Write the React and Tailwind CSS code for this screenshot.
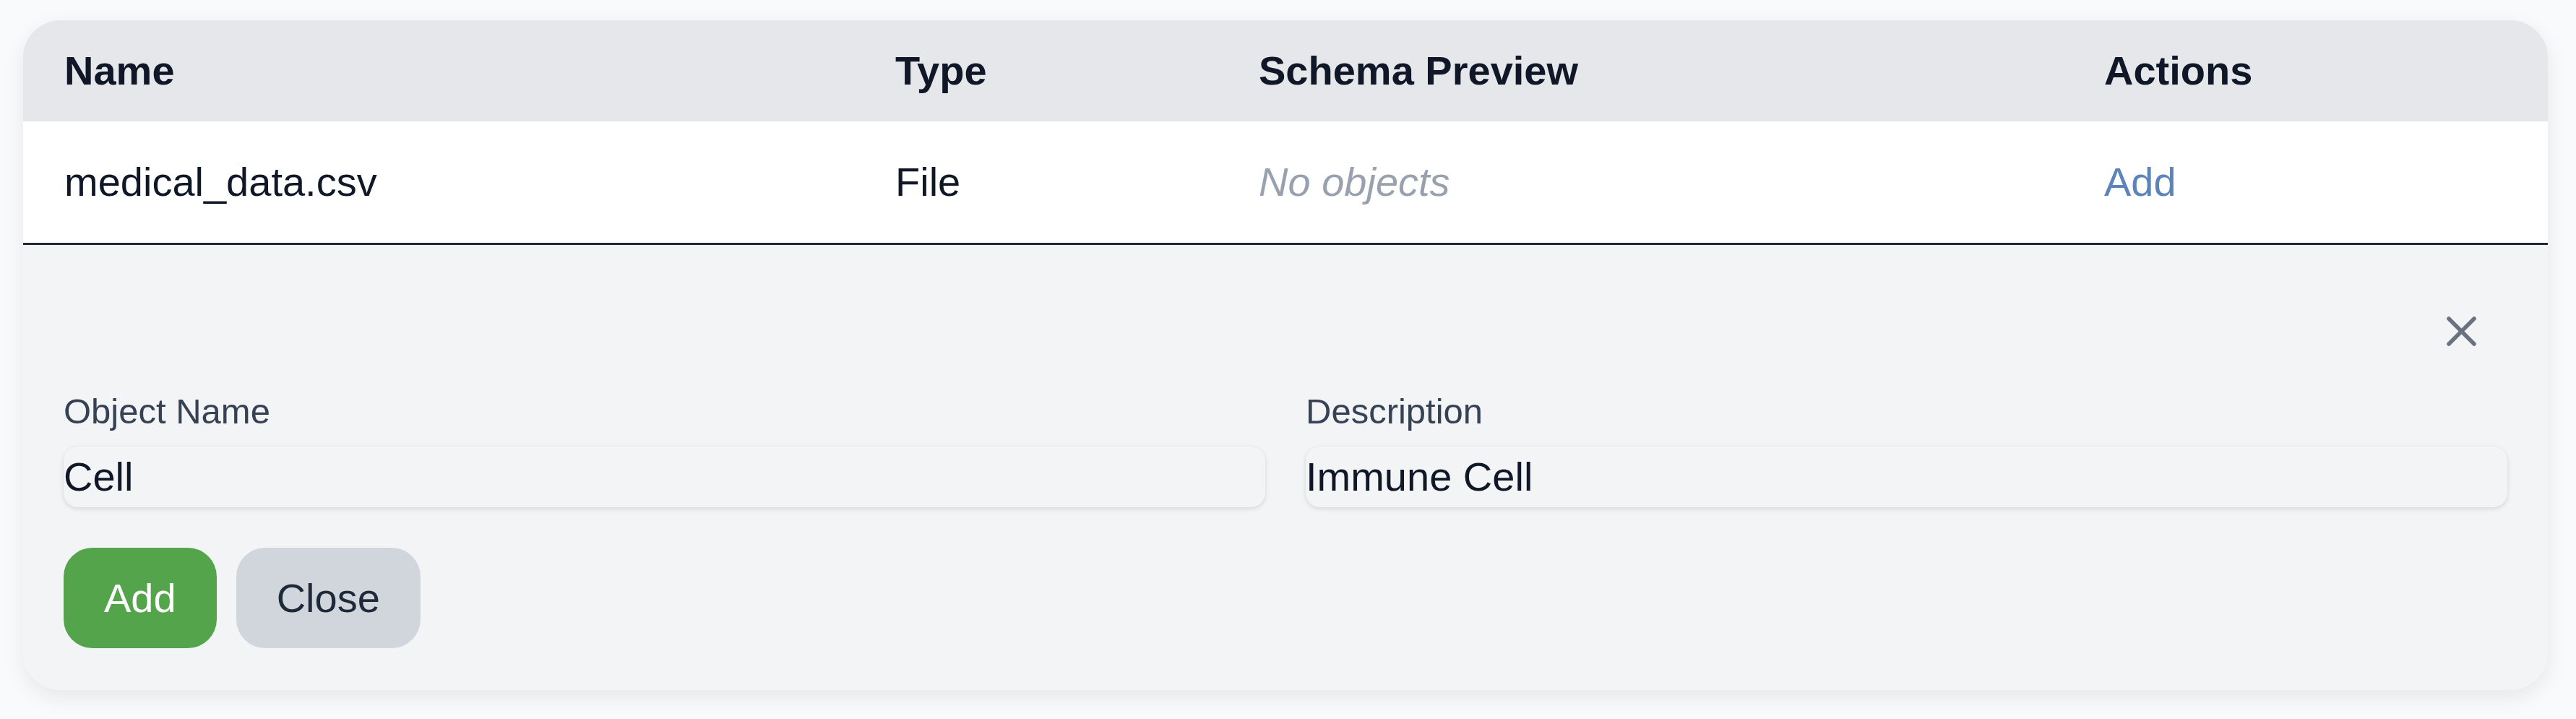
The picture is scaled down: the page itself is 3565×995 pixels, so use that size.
import React from 'react';

const font = { fontFamily: '"Liberation Sans", Arial, sans-serif' };

const Field = ({ label, value }) => (
  <div className="flex flex-col">
    <label className="block text-[49px] leading-[72px] text-gray-700 mb-[13px]">{label}</label>
    <input
      type="text"
      defaultValue={value}
      className="w-full h-[84px] bg-gray-100 rounded-[20px] shadow-[0_2px_6px_rgba(0,0,0,0.13)] px-0 text-[56px] text-gray-900 outline-none"
    />
  </div>
);

const App = () => {
  return (
    <div className="bg-gray-50 min-h-screen pt-[28px] pl-[32px]" style={font}>
      <div className="w-[3494px] rounded-[52px] overflow-hidden bg-gray-100 shadow-[0_10px_30px_rgba(0,0,0,0.08)]">
        {/* Table header */}
        <div className="grid grid-cols-[1150px_503px_1170px_1fr] h-[140px] items-center bg-gray-200 text-[56px] font-bold text-gray-900">
          <div className="pl-[57px]">Name</div>
          <div className="pl-[57px]">Type</div>
          <div className="pl-[57px]">Schema Preview</div>
          <div className="pl-[57px]">Actions</div>
        </div>

        {/* Row */}
        <div className="grid grid-cols-[1150px_503px_1170px_1fr] h-[171px] items-center bg-white text-[56px] text-gray-900 border-b-[3px] border-gray-800">
          <div className="pl-[57px]">medical_data.csv</div>
          <div className="pl-[57px]">File</div>
          <div className="pl-[57px] italic text-gray-400">No objects</div>
          <div className="pl-[57px]">
            <button className="text-[#5b84ba]">Add</button>
          </div>
        </div>

        {/* Add object panel */}
        <div className="bg-gray-100 pt-[56px] px-[56px] pb-[58px]">
          <div className="flex justify-end items-start h-[138px]">
            <button className="mt-[43px] mr-[43px] text-gray-500">
              <svg width="41" height="41" viewBox="0 0 41 41" fill="none" stroke="currentColor" strokeWidth="5.5" strokeLinecap="round">
                <path d="M3 3 38 38M38 3 3 38" />
              </svg>
            </button>
          </div>

          <div className="grid grid-cols-2 gap-x-[56px]">
            <Field label="Object Name" value="Cell" />
            <Field label="Description" value="Immune Cell" />
          </div>

          <div className="flex gap-[27px] mt-[56px]">
            <button className="h-[139px] px-[56px] rounded-[40px] bg-[#53a44a] text-white text-[56px] flex items-center">
              Add
            </button>
            <button className="h-[139px] px-[56px] rounded-[40px] bg-gray-300 text-gray-800 text-[56px] flex items-center">
              Close
            </button>
          </div>
        </div>
      </div>
    </div>
  );
};

export default App;
